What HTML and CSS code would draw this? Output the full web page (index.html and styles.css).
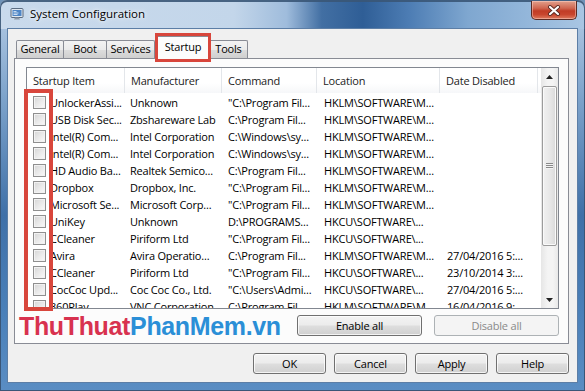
FILE: index.html
```html
<!DOCTYPE html>
<html>
<head>
<meta charset="utf-8">
<link rel="stylesheet" href="styles.css">
</head>
<body>
<div class="window">
  <div class="titlebar">
    <svg class="app-icon" width="14" height="14" viewBox="0 0 14 14">
      <rect x="1" y="1.5" width="12" height="9" rx="1" fill="#dfe6ee" stroke="#5a6b80" stroke-width="1"/>
      <rect x="2.5" y="3" width="9" height="6" fill="#4f86c6"/>
      <path d="M3.5 4.5h3M3.5 6h5M3.5 7.5h4" stroke="#e8f1fb" stroke-width="0.8"/>
      <path d="M4 12.5h6l-1-2H5z" fill="#8a96a5"/>
    </svg>
    <span class="title">System Configuration</span>
    <div class="close">
      <svg width="14" height="11" viewBox="0 0 14 11">
        <path d="M3 2l8 7M11 2l-8 7" stroke="#5b2a22" stroke-width="4" stroke-linecap="round"/>
        <path d="M3 2l8 7M11 2l-8 7" stroke="#ffffff" stroke-width="2.2" stroke-linecap="round"/>
      </svg>
    </div>
  </div>
  <div class="client">
    <div class="tabs">
      <div class="tab t-general">General</div>
      <div class="tab t-boot">Boot</div>
      <div class="tab t-services">Services</div>
      <div class="tab active">Startup<span class="mark mark-tab"></span></div>
      <div class="tab t-tools">Tools</div>
    </div>
    <div class="panel">
      <div class="list">
        <div class="list-body">
          <div class="lv-header">
            <div class="hcell">Startup Item</div>
            <div class="hcell">Manufacturer</div>
            <div class="hcell">Command</div>
            <div class="hcell">Location</div>
            <div class="hcell">Date Disabled</div>
          </div>
          <div class="lv-rows">
            <div class="row"><div class="cell first"><span class="cb"></span><span class="name">UnlockerAssi...</span></div><div class="cell">Unknown</div><div class="cell cmd">"C:\Program Fil...</div><div class="cell loc">HKLM\SOFTWARE\M...</div><div class="cell date"></div></div>
            <div class="row"><div class="cell first"><span class="cb"></span><span class="name">USB Disk Sec...</span></div><div class="cell">Zbshareware Lab</div><div class="cell cmd">C:\Program Fil...</div><div class="cell loc">HKLM\SOFTWARE\M...</div><div class="cell date"></div></div>
            <div class="row"><div class="cell first"><span class="cb"></span><span class="name">Intel(R) Com...</span></div><div class="cell">Intel Corporation</div><div class="cell cmd">C:\Windows\sy...</div><div class="cell loc">HKLM\SOFTWARE\M...</div><div class="cell date"></div></div>
            <div class="row"><div class="cell first"><span class="cb"></span><span class="name">Intel(R) Com...</span></div><div class="cell">Intel Corporation</div><div class="cell cmd">C:\Windows\sy...</div><div class="cell loc">HKLM\SOFTWARE\M...</div><div class="cell date"></div></div>
            <div class="row"><div class="cell first"><span class="cb"></span><span class="name">HD Audio Ba...</span></div><div class="cell">Realtek Semico...</div><div class="cell cmd">C:\Program Fil...</div><div class="cell loc">HKLM\SOFTWARE\M...</div><div class="cell date"></div></div>
            <div class="row"><div class="cell first"><span class="cb"></span><span class="name">Dropbox</span></div><div class="cell">Dropbox, Inc.</div><div class="cell cmd">"C:\Program Fil...</div><div class="cell loc">HKLM\SOFTWARE\M...</div><div class="cell date"></div></div>
            <div class="row"><div class="cell first"><span class="cb"></span><span class="name">Microsoft Se...</span></div><div class="cell">Microsoft Corp...</div><div class="cell cmd">"C:\Program Fil...</div><div class="cell loc">HKLM\SOFTWARE\M...</div><div class="cell date"></div></div>
            <div class="row"><div class="cell first"><span class="cb"></span><span class="name">UniKey</span></div><div class="cell">Unknown</div><div class="cell cmd">D:\PROGRAMS...</div><div class="cell loc">HKCU\SOFTWARE\...</div><div class="cell date"></div></div>
            <div class="row"><div class="cell first"><span class="cb"></span><span class="name">CCleaner</span></div><div class="cell">Piriform Ltd</div><div class="cell cmd">"C:\Program Fil...</div><div class="cell loc">HKCU\SOFTWARE\...</div><div class="cell date"></div></div>
            <div class="row"><div class="cell first"><span class="cb"></span><span class="name">Avira</span></div><div class="cell">Avira Operatio...</div><div class="cell cmd">C:\Program Fil...</div><div class="cell loc">HKLM\SOFTWARE\M...</div><div class="cell date">27/04/2016 5:...</div></div>
            <div class="row"><div class="cell first"><span class="cb"></span><span class="name">CCleaner</span></div><div class="cell">Piriform Ltd</div><div class="cell cmd">"C:\Program Fil...</div><div class="cell loc">HKCU\SOFTWARE\...</div><div class="cell date">23/10/2014 3:...</div></div>
            <div class="row"><div class="cell first"><span class="cb"></span><span class="name">CocCoc Upd...</span></div><div class="cell">Coc Coc Co., Ltd.</div><div class="cell cmd">"C:\Users\Admi...</div><div class="cell loc">HKCU\SOFTWARE\...</div><div class="cell date">27/04/2016 5:...</div></div>
            <div class="row partial"><div class="cell first"><span class="cb"></span><span class="name">360Play</span></div><div class="cell">VNC Corporation</div><div class="cell cmd">C:\Program Fil...</div><div class="cell loc">HKLM\SOFTWARE\M...</div><div class="cell date">16/04/2016 9:...</div></div>
          </div>
        </div>
        <div class="scrollbar">
          <div class="sb-btn"><svg width="7" height="4" viewBox="0 0 7 4"><path d="M0 4L3.5 0L7 4z" fill="#222"/></svg></div>
          <div class="sb-track">
            <div class="sb-thumb"><span class="grip"></span></div>
          </div>
          <div class="sb-btn"><svg width="7" height="4" viewBox="0 0 7 4"><path d="M0 0L3.5 4L7 0z" fill="#222"/></svg></div>
        </div>
        <span class="mark mark-checks"></span>
      </div>
      <div class="panel-actions">
        <div class="logo"><span class="logo-red">ThuThuat</span><span class="logo-blue">PhanMem.vn</span></div>
        <button class="btn wide">Enable all</button>
        <button class="btn wide disabled">Disable all</button>
      </div>
    </div>
    <div class="dialog-buttons">
      <button class="btn">OK</button>
      <button class="btn">Cancel</button>
      <button class="btn">Apply</button>
      <button class="btn">Help</button>
    </div>
  </div>
</div>
</body>
</html>
```

FILE: styles.css
```css
* { box-sizing: border-box; }
html, body { margin: 0; padding: 0; }
body {
  width: 585px;
  height: 391px;
  overflow: hidden;
  background: #6f93b8;
  font-family: "Open Sans", "Noto Sans", sans-serif;
  font-size: 11px;
  letter-spacing: -0.2px;
  color: #000;
}
.window {
  width: 585px;
  height: 391px;
  display: flex;
  flex-direction: column;
  border-radius: 7px 7px 0 0;
  background: linear-gradient(180deg, #b7cde6 0%, #7da3cb 25%, #3f70a8 55%, #4a80b9 80%, #5a8dc3 100%);
  box-shadow: inset 0 0 0 1px #3a5677;
  padding: 0 8px 9px 8px;
}
.titlebar {
  height: 29px;
  margin: 0 -8px;
  padding: 0 8px 0 10px;
  display: flex;
  align-items: flex-start;
  border-radius: 7px 7px 0 0;
  background: linear-gradient(90deg, #c9daec 0%, #c3d6ea 40%, #9fbcdc 49%, #426fa3 55%, #2f5e96 62%, #4d7db4 70%, #7fa7d0 80%, #93b6da 90%, #a9c6e3 100%);
  box-shadow: inset 0 1px 0 1px rgba(58,86,119,.9);
}
.app-icon { margin-top: 7px; flex: none; }
.title {
  margin: 6px 0 0 6px;
  font-size: 11.5px;
  line-height: 16px;
  letter-spacing: 0;
  text-shadow: 0 0 6px rgba(255,255,255,.9), 0 0 3px rgba(255,255,255,.9);
}
.close {
  margin-left: auto;
  margin-top: 1px;
  width: 46px;
  height: 19px;
  border: 1px solid #5a2b24;
  border-top: none;
  border-radius: 0 0 5px 5px;
  background: linear-gradient(180deg, #e2a08c 0%, #cf6650 40%, #c13c26 55%, #c8462e 75%, #de7a5e 100%);
  box-shadow: inset 0 0 0 1px rgba(255,220,210,.45);
  display: flex;
  align-items: center;
  justify-content: center;
}
.client {
  flex: 1;
  background: #f0f0f0;
  box-shadow: 0 0 0 1px #5c7ea6;
  display: flex;
  flex-direction: column;
}
.tabs {
  height: 29px;
  display: flex;
  align-items: flex-end;
  padding-left: 8px;
  position: relative;
  z-index: 2;
}
.tab {
  height: 18px;
  border: 1px solid #898c95;
  border-bottom: none;
  border-radius: 2px 2px 0 0;
  margin-right: -1px;
  background: linear-gradient(180deg, #f3f3f3 0%, #ebebeb 50%, #dddddd 51%, #cfcfcf 100%);
  display: flex;
  align-items: center;
  justify-content: center;
  line-height: 14px;
  padding-bottom: 1px;
}
.t-general { width: 48px; }
.t-boot { width: 44px; }
.t-services { width: 49px; }
.t-tools { width: 39px; margin-left: -1px; }
.tab.active {
  width: 54px;
  height: 23px;
  margin: 0 0 -1px 2px;
  background: #fcfcfc;
  position: relative;
  padding-bottom: 3px;
  z-index: 3;
}
.mark {
  position: absolute;
  border: 3px solid #d8463c;
  pointer-events: none;
}
.mark-tab { left: -2px; right: -2px; top: -4px; bottom: -3px; }
.panel {
  margin: 0 8px 0 6px;
  height: 286px;
  border: 1px solid #898c95;
  background: #fcfcfc;
  padding: 8px 9px 7px 11px;
  display: flex;
  flex-direction: column;
  position: relative;
  z-index: 1;
}
.list {
  height: 242px;
  border: 1px solid #828790;
  background: #fff;
  display: flex;
  position: relative;
}
.list-body { flex: 1; overflow: hidden; }
.lv-header, .row {
  display: grid;
  grid-template-columns: 98px 97px 95px 123px 98px;
}
.lv-header {
  height: 25px;
  background: linear-gradient(180deg, #ffffff 0%, #ffffff 60%, #f6f7f9 100%);
  color: #1b1b1b;
}
.hcell {
  border-right: 1px solid #e3e6ea;
  padding-left: 6px;
  line-height: 26px;
  white-space: nowrap;
  overflow: hidden;
}
.lv-rows { padding-top: 1px; }
.row { height: 17px; line-height: 17px; }
.row.partial { height: 10px; overflow: hidden; }
.row.partial .cell { align-items: flex-start; }
.cell {
  padding-left: 5px;
  white-space: nowrap;
  overflow: hidden;
}
.cell.first {
  padding-left: 6px;
  display: flex;
  align-items: center;
  gap: 4px;
}
.row.partial .cb { margin-top: 2px; }
.cell.cmd { padding-left: 6px; }
.cell.loc { padding-left: 7px; }
.cell.date { padding-left: 7px; }
.cb {
  flex: none;
  width: 13px;
  height: 13px;
  border: 1px solid #8f8f8f;
  background: linear-gradient(135deg, #d5d5d5 0%, #e9e9e9 50%, #fafafa 100%);
  box-shadow: inset 0 0 0 1px #f2f2f2;
}
.mark-checks { left: -3px; top: 21px; width: 29px; height: 222px; border-width: 4px; }
.scrollbar {
  width: 17px;
  display: flex;
  flex-direction: column;
  background: linear-gradient(90deg, #e6e6e6 0%, #f4f4f4 40%, #f4f4f4 70%, #e9e9e9 100%);
}
.sb-btn {
  height: 17px;
  display: flex;
  align-items: center;
  justify-content: center;
}
.sb-track { flex: 1; padding-top: 1px; }
.sb-thumb {
  margin: 0 0 0 1px;
  width: 15px;
  height: 160px;
  border: 1px solid #9c9c9c;
  border-radius: 2px;
  background: linear-gradient(90deg, #f1f1f1 0%, #e8e8e8 50%, #dadada 100%);
  box-shadow: inset 0 0 0 1px #fafafa;
  display: flex;
  align-items: center;
  justify-content: center;
}
.grip {
  width: 7px;
  height: 6px;
  background: repeating-linear-gradient(180deg, #8a8a8a 0 1px, #f4f4f4 1px 2px);
}
.panel-actions {
  margin-top: 6px;
  height: 21px;
  display: flex;
  align-items: center;
  gap: 12px;
}
.logo {
  flex: 1;
  margin-left: -7px;
  margin-top: 2px;
  font-family: "Liberation Sans", Arial, sans-serif;
  font-weight: bold;
  font-size: 25px;
  line-height: 25px;
  height: 25px;
  letter-spacing: -0.35px;
  white-space: nowrap;
}
.logo-red { color: #d8324f; }
.logo-blue { color: #2b8fd7; }
.btn {
  font-family: "Open Sans", "Noto Sans", sans-serif;
  font-size: 11px;
  letter-spacing: -0.2px;
  height: 21px;
  width: 73px;
  padding: 0;
  border: 1px solid #707070;
  border-radius: 3px;
  background: linear-gradient(180deg, #f3f3f3 0%, #ececec 48%, #dedede 52%, #d0d0d0 100%);
  box-shadow: inset 0 0 0 1px rgba(255,255,255,.75);
  color: #000;
}
.btn.wide { width: 125px; flex: none; }
.btn.disabled {
  border-color: #adb2b5;
  background: #f4f4f4;
  color: #8a8a8a;
  box-shadow: none;
}
.dialog-buttons {
  margin-top: 9px;
  display: flex;
  justify-content: flex-end;
  gap: 8px;
  padding-right: 8px;
}
```
